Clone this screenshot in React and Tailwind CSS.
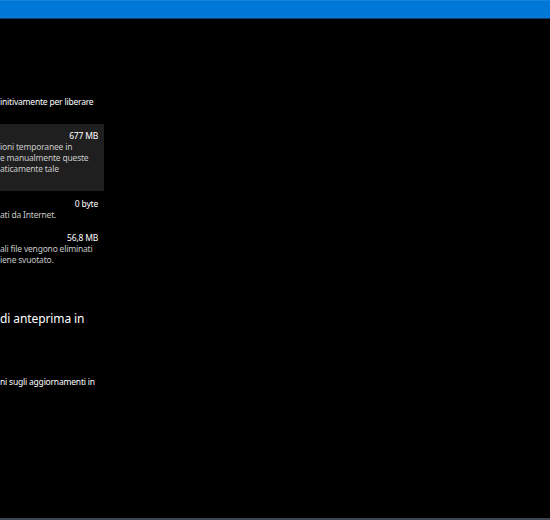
export default function App() {
  return (
    <div className="w-[550px] h-[520px] bg-black overflow-hidden flex flex-col font-['Noto_Sans',sans-serif] text-white">
      {/* title bar */}
      <div className="h-[19px] shrink-0 bg-[#0078d7] border-t border-[#1784dc] border-b border-b-[#0b3f70]" />

      <div className="flex-1 w-[104px] flex flex-col text-[8.5px] leading-[11px] tracking-[-0.2px]">
        <p className="mt-[77px] whitespace-nowrap">initivamente per liberare</p>

        {/* selected item */}
        <div className="mt-[17px] h-[67px] bg-[#1f1f1f] pr-[6px] pt-[6px]">
          <div className="text-right">677 MB</div>
          <div className="text-[#c8c8c8] whitespace-nowrap">
            <div>ioni temporanee in</div>
            <div>e manualmente queste</div>
            <div>aticamente tale</div>
          </div>
        </div>

        <div className="mt-[7px] pr-[6px]">
          <div className="text-right">0 byte</div>
          <div className="text-[#c8c8c8] whitespace-nowrap">ati da Internet.</div>
        </div>

        <div className="mt-[12px] pr-[6px]">
          <div className="text-right">56,8 MB</div>
          <div className="text-[#c8c8c8] whitespace-nowrap">
            <div>ali file vengono eliminati</div>
            <div>iene svuotato.</div>
          </div>
        </div>

        <h2 className="mt-[46px] text-[12px] leading-[16px] tracking-[-0.1px] whitespace-nowrap">di anteprima in</h2>

        <p className="mt-[49px] whitespace-nowrap">ni sugli aggiornamenti in</p>
      </div>

      <div className="h-[2px] shrink-0 bg-[#3d4452]" />
    </div>
  )
}
